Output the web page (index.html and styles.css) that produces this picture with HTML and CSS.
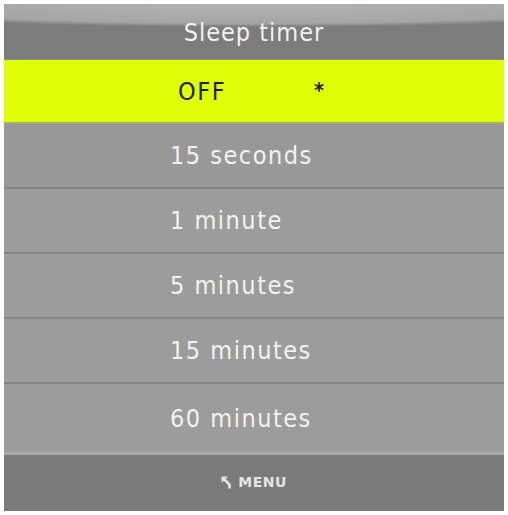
FILE: index.html
```html
<!DOCTYPE html>
<html lang="en">
<head>
<meta charset="utf-8">
<title>Sleep timer</title>
<link rel="stylesheet" href="styles.css">
</head>
<body>
<div class="screen">
  <header class="title-bar">Sleep timer</header>
  <ul class="options">
    <li class="option selected"><span class="label">OFF</span><span class="mark">*</span></li>
    <li class="option">15 seconds</li>
    <li class="option">1 minute</li>
    <li class="option">5 minutes</li>
    <li class="option">15 minutes</li>
    <li class="option tall">60 minutes</li>
  </ul>
  <footer class="hint-bar">
    <svg class="back-icon" width="13" height="13" viewBox="0 0 13 13" aria-hidden="true">
      <polygon points="0.5,0.5 7,0.5 0.5,7" fill="#e4e4e4"/>
      <path d="M2.5 2.5 L8.5 8.5 L8.5 12.5" fill="none" stroke="#e4e4e4" stroke-width="2.6"/>
    </svg>
    <span class="hint-text">MENU</span>
  </footer>
</div>
</body>
</html>
```
FILE: styles.css
```css
html, body {
  margin: 0;
  padding: 0;
  background: #ffffff;
}

.screen {
  margin: 4px 0 0 4px;
  width: 500px;
  height: 507px;
  display: flex;
  flex-direction: column;
  background: #7b7b7b;
  font-family: "DejaVu Sans Condensed", "DejaVu Sans", sans-serif;
  color: #f2f2f2;
}

/* glossy title bar: a pale elliptical sheen across the top */
.title-bar {
  height: 56px;
  flex: none;
  display: flex;
  align-items: center;
  justify-content: center;
  padding-top: 2px;
  box-sizing: border-box;
  font-size: 25px;
  letter-spacing: 1px;
  background:
    radial-gradient(ellipse 420px 20px at 50% 3px, #b2b2b2 0%, #a5a5a5 82%, #7c7c7c 100%),
    #7b7b7b;
  border-bottom: 1px solid #8a8a8a;
}

.options {
  list-style: none;
  margin: 0;
  padding: 0;
  display: flex;
  flex-direction: column;
}

.option {
  height: 63px;
  box-sizing: content-box;
  display: flex;
  align-items: center;
  padding-left: 166px;
  font-size: 25px;
  letter-spacing: 1.5px;
  background: #9c9c9c;
  border-bottom: 2px solid #858585;
}

.option:nth-child(2) {
  background: #989898;
}

.option.tall {
  height: 68px;
  border-bottom: 3px solid #a9a9a9;
}

.option.selected {
  height: 62px;
  padding-left: 174px;
  background: #e0ff06;
  color: #1e1e14;
  border-bottom: 2px solid #a3aa72;
}

.label {
  display: inline-block;
  width: 136px;
}

.mark {
  font-size: 21px;
  font-weight: bold;
  align-self: flex-start;
  margin-top: 19px;
}

.hint-bar {
  flex: 1;
  display: flex;
  align-items: center;
  justify-content: center;
  gap: 4px;
  padding-bottom: 2px;
  background: #7a7a7a;
}

.back-icon {
  display: block;
}

.hint-text {
  font-family: "DejaVu Sans", sans-serif;
  font-weight: bold;
  font-size: 14px;
  letter-spacing: 0.5px;
  color: #e4e4e4;
}
```
